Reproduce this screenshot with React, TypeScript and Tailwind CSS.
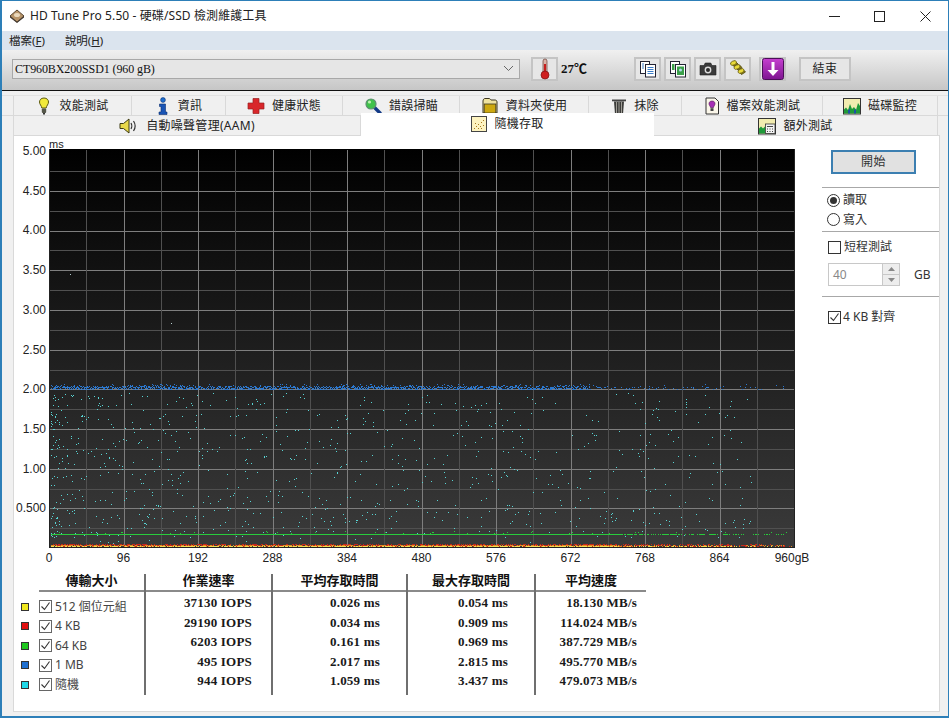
import type { ReactNode } from "react";

// seeded random so the scatter stays the same every run
let seed = 20240607;
function rnd() {
  seed = (seed * 1664525 + 1013904223) % 4294967296;
  return seed / 4294967296;
}

// walk the x axis and drop a dot per pixel column with probability p(x)
function band(p: (x: number) => number, yFn: () => number, layers = 1) {
  let d = "";
  for (let l = 0; l < layers; l++) {
    for (let x = 51; x < 793; x++) {
      if (rnd() < p(x)) d += `M${x} ${Math.round(yFn())}h1v1h-1z`;
    }
  }
  return d;
}

function scatter(count: number) {
  let d = "";
  for (let i = 0; i < count; i++) {
    const x = Math.round(51 + Math.pow(rnd(), 1.6) * 700);
    const y = Math.round(rnd() < 0.1 ? 505 + rnd() * 38 : 392 + rnd() * 145);
    d += `M${x} ${y}h1v1h-1z`;
  }
  return d;
}

const fade = (x: number) => (x < 590 ? 0.95 : x < 700 ? 0.2 : x < 760 ? 0.12 : 0.01);
const fadeLow = (x: number) => (x < 620 ? 1 : x < 730 ? 0.6 : x < 785 ? 0.38 : 0.05);

const cyanDots = scatter(880);
const blueDots =
  band((x) => fade(x), () => 386 + rnd() * 3.4, 2) +
  band((x) => (x < 600 ? 0.45 : 0.04), () => 384 + rnd() * 4);
const greenDots =
  band(fadeLow, () => 534) + band((x) => (x < 620 ? 0.08 : 0.02), () => 531 + rnd() * 3);
const redDots = band(fadeLow, () => 544 + rnd() * 2, 2);
const orangeDots = band(fadeLow, () => 545 + rnd());
const yellowDots = band((x) => fadeLow(x) * 0.7, () => 545.5 + rnd());

const ROW1: [string, number, ReactNode][] = [
  ["效能測試", 118, <BulbIcon />],
  ["資訊", 94, <InfoIcon />],
  ["健康狀態", 117, <CrossIcon />],
  ["錯誤掃瞄", 117, <SearchIcon />],
  ["資料夾使用", 129, <FolderIcon />],
  ["抹除", 93, <TrashIcon />],
  ["檔案效能測試", 141, <FileIcon />],
  ["磁碟監控", 115, <MonitorIcon />],
];

const ROWS = [
  { color: "bg-[#f0e81e]", label: "512 個位元組", iops: "37130 IOPS", avg: "0.026 ms", max: "0.054 ms", speed: "18.130 MB/s" },
  { color: "bg-[#e01010]", label: "4 KB", iops: "29190 IOPS", avg: "0.034 ms", max: "0.909 ms", speed: "114.024 MB/s" },
  { color: "bg-[#1ec81e]", label: "64 KB", iops: "6203 IOPS", avg: "0.161 ms", max: "0.969 ms", speed: "387.729 MB/s" },
  { color: "bg-[#1f6fd0]", label: "1 MB", iops: "495 IOPS", avg: "2.017 ms", max: "2.815 ms", speed: "495.770 MB/s" },
  { color: "bg-[#1fd8e8]", label: "隨機", iops: "944 IOPS", avg: "1.059 ms", max: "3.437 ms", speed: "479.073 MB/s" },
];

function BulbIcon() {
  return (
    <svg width="16" height="18" viewBox="0 0 16 18">
      <path d="M8 1c-3 0-4.500 2-4.500 4 0 2.500 2 3.500 2.300 6h4.400c.3-2.500 2.300-3.500 2.300-6 0-2-1.500-4-4.500-4z" fill="#f2ea3a" stroke="#5c5a10" />
      <rect x="5.800" y="11.500" width="4.400" height="4.500" rx="1" fill="#55574a" />
      <rect x="7" y="16" width="2" height="1.500" fill="#333" />
    </svg>
  );
}
function InfoIcon() {
  return (
    <svg width="16" height="18" viewBox="0 0 16 18">
      <circle cx="8" cy="3" r="2.400" fill="#1f6fd0" stroke="#0c2f70" strokeWidth=".6" />
      <path d="M4.500 7h6v8h1.500v2.500H4V15h2V9.500H4.500z" fill="#1a55b5" stroke="#0c2f70" strokeWidth=".6" />
    </svg>
  );
}
function CrossIcon() {
  return (
    <svg width="18" height="18" viewBox="0 0 18 18">
      <path d="M6 1.500h6v4.500h5v6h-5v4.500H6V12H1V6h5z" fill="#d8262a" stroke="#9a2020" strokeWidth=".7" />
    </svg>
  );
}
function SearchIcon() {
  return (
    <svg width="18" height="18" viewBox="0 0 18 18">
      <line x1="10" y1="10" x2="16" y2="16" stroke="#123a86" strokeWidth="3.400" strokeLinecap="round" />
      <circle cx="7" cy="7" r="5" fill="#3fc24a" stroke="#5d8f70" strokeWidth="1.200" />
      <circle cx="5.500" cy="5" r="1.600" fill="#bdf0b0" />
    </svg>
  );
}
function FolderIcon() {
  return (
    <svg width="18" height="18" viewBox="0 0 18 18">
      <path d="M2 4c0-1.500 1-2.500 2-2.500h4c1 0 1.500 1 2 1.500h4c1 0 2 .6 2 2v11H2z" fill="#efe3a0" stroke="#3b3520" />
      <rect x="3.200" y="7" width="11.600" height="9" fill="#cda80f" stroke="#3b3520" strokeWidth=".8" />
    </svg>
  );
}
function TrashIcon() {
  return (
    <svg width="16" height="18" viewBox="0 0 16 18">
      <path d="M1 2.500h14v1.800H1z" fill="#444" />
      <path d="M3 4.500h10l-1 12.500H4z" fill="#3c3c3a" />
      <path d="M5.500 5v11.500M8 5v11.500M10.500 5v11.500" stroke="#aaa8a0" strokeWidth=".9" />
    </svg>
  );
}
function FileIcon() {
  return (
    <svg width="16" height="18" viewBox="0 0 16 18">
      <path d="M2 1h9l3.500 3.500V17H2z" fill="#fbf7ea" stroke="#333" />
      <path d="M8 4c-2 0-3 1.300-3 2.700 0 1.600 1.300 2.200 1.500 3.800h3c.2-1.600 1.500-2.200 1.500-3.800C11 5.300 10 4 8 4z" fill="#a52fb5" stroke="#4a1050" strokeWidth=".6" />
      <rect x="6.500" y="11.200" width="3" height="2.800" fill="#444" />
    </svg>
  );
}
function MonitorIcon() {
  return (
    <svg width="18" height="18" viewBox="0 0 18 18">
      <rect x=".5" y="1.500" width="17" height="15.500" fill="#f2ecb0" stroke="#333" />
      <path d="M1 16.500v-4l2-2 2 2.500 2-6 2 5 2-2 2 3 2-7 2 3v7.500z" fill="#1f9a3a" />
      <path d="M5 16.500v-3l2-2v5zM11 16.500v-3l2-2v5z" fill="#1d4fa8" />
    </svg>
  );
}
function SpeakerIcon() {
  return (
    <svg width="20" height="16" viewBox="0 0 20 16">
      <path d="M1 5.500h3.500L10 1v14L4.500 10.500H1z" fill="#e8d84a" stroke="#3d3a10" />
      <path d="M12 5c1 1.500 1 4.500 0 6M14.500 3c2 3 2 7 0 10" fill="none" stroke="#333" strokeWidth="1.200" />
    </svg>
  );
}
function RandomIcon() {
  return (
    <svg width="16" height="16" viewBox="0 0 16 16">
      <rect x=".5" y=".5" width="15" height="15" fill="#fdf3c0" stroke="#444" />
      <path d="M3 12h1v1H3zM5 10h1v1H5zM7 12h1v1H7zM7 8h1v1H7zM9 10h1v1H9zM10 6h1v1h-1zM12 4h1v1h-1zM12 9h1v1h-1zM4 7h1v1H4zM10 12h1v1h-1z" fill="#a87a20" />
    </svg>
  );
}
function ExtraIcon() {
  return (
    <svg width="18" height="18" viewBox="0 0 18 18">
      <rect x=".5" y="1.500" width="17" height="15.500" fill="#f2ecb0" stroke="#333" />
      <path d="M1 16.500v-5l2-2 2 2 2-2v7z" fill="#1f9a3a" />
      <rect x="7.500" y="7" width="9.500" height="9.500" fill="#f4f4f4" stroke="#333" strokeWidth=".8" />
      <path d="M9 9h6v1H9zM9 11.500h1v1H9zM11.500 11.500h1v1h-1zM14 11.500h1v1h-1zM9 14h1v1H9zM11.500 14h1v1h-1zM14 14h1v1h-1z" fill="#444" />
    </svg>
  );
}
function ThermoIcon() {
  return (
    <svg width="14" height="22" viewBox="0 0 14 22">
      <rect x="5" y="1" width="4" height="14" rx="2" fill="#d9b3a8" stroke="#6a3a30" strokeWidth=".7" />
      <rect x="6" y="6" width="2" height="9" fill="#c81e1e" />
      <circle cx="7" cy="17" r="4" fill="#cf2020" stroke="#7a1414" strokeWidth=".7" />
    </svg>
  );
}
function CopyTextIcon() {
  return (
    <svg width="18" height="18" viewBox="0 0 18 18">
      <rect x="1.500" y="1.500" width="9" height="12" fill="#fff" stroke="#223" />
      <rect x="6.500" y="4.500" width="10" height="12.500" fill="#fff" stroke="#223" />
      <path d="M8.500 7.500h6M8.500 9.500h6M8.500 11.500h6M8.500 13.500h6" stroke="#3b7cc8" />
      <path d="M3 4h2M3 6h2M3 8h2" stroke="#3b7cc8" />
    </svg>
  );
}
function CopyImageIcon() {
  return (
    <svg width="18" height="18" viewBox="0 0 18 18">
      <rect x="1.500" y="1.500" width="9" height="12" fill="#fff" stroke="#223" />
      <rect x="6.500" y="4.500" width="10" height="12.500" fill="#fff" stroke="#223" />
      <rect x="8" y="6.500" width="7" height="8.500" fill="#3aa04a" />
      <rect x="3" y="4" width="2.500" height="6" fill="#3aa04a" />
      <circle cx="11.500" cy="10" r="1.500" fill="#b5d8f0" />
    </svg>
  );
}
function CameraIcon() {
  return (
    <svg width="18" height="16" viewBox="0 0 18 16">
      <path d="M1 4.500h4l1.200-2.500h5.600L13 4.500h4V14H1z" fill="#3a3a3a" stroke="#222" strokeWidth=".6" />
      <circle cx="9" cy="9" r="3.400" fill="#dcdcdc" />
      <circle cx="9" cy="9" r="2" fill="#2b2b2b" />
    </svg>
  );
}
function CoinsIcon() {
  return (
    <svg width="20" height="20" viewBox="0 0 20 20">
      <path d="M3 4l4-2 3 3-4 2.500zM7 8l4-2.500 3 3-4 2.500zM10 12l4-2.500 3.500 3.500-4 2.500z" fill="#8a7a14" stroke="#4c4408" strokeWidth=".8" />
      <ellipse cx="5.500" cy="4" rx="3.200" ry="2" transform="rotate(-25 5.500 4)" fill="#eadb3a" stroke="#5f5610" strokeWidth=".7" />
      <ellipse cx="9" cy="8" rx="3.200" ry="2" transform="rotate(-25 9 8)" fill="#eadb3a" stroke="#5f5610" strokeWidth=".7" />
      <ellipse cx="13" cy="12" rx="3.200" ry="2" transform="rotate(-25 13 12)" fill="#eadb3a" stroke="#5f5610" strokeWidth=".7" />
    </svg>
  );
}
function SaveDownIcon() {
  return (
    <svg width="22" height="22" viewBox="0 0 22 22">
      <defs>
        <linearGradient id="pur" x1="0" y1="0" x2="0" y2="1">
          <stop offset="0" stopColor="#c63fd0" />
          <stop offset="1" stopColor="#7d1590" />
        </linearGradient>
      </defs>
      <rect x=".5" y=".5" width="21" height="21" rx="2" fill="url(#pur)" stroke="#4b0f58" />
      <path d="M9.500 4h3v8h4l-5.500 6-5.500-6h4z" fill="#fff" />
    </svg>
  );
}
function DriveIcon() {
  return (
    <svg width="16" height="14" viewBox="0 0 16 14">
      <path d="M8 1l7 6-7 6-7-6z" fill="#b8956a" stroke="#5a4632" />
      <path d="M1 7l7 6 7-6v1.500L8 14 1 8.500z" fill="#3a3028" />
      <ellipse cx="8" cy="6" rx="3" ry="2" fill="#ead9bd" />
    </svg>
  );
}

function Tab({ label, width, icon, gap = "gap-[7px]" }: { label: string; width: number; icon: ReactNode; gap?: string }) {
  return (
    <div style={{ width }} className={`flex h-full shrink-0 items-center justify-center ${gap} border-r border-[#d9d9d9] text-[12px] tracking-[0.3px] text-[#222]`}>
      {icon}
      <span>{label}</span>
    </div>
  );
}

function ToolBtn({ children, className = "ml-[3px]" }: { children: ReactNode; className?: string }) {
  return <div className={`flex h-[24px] w-[27px] items-center justify-center border-2 border-[#c4c4c4] bg-[#e6e6e6] ${className}`}>{children}</div>;
}

function Check({ on = true, dim = false }: { on?: boolean; dim?: boolean }) {
  return (
    <span className={`flex h-[13px] w-[13px] shrink-0 items-center justify-center border bg-white ${dim ? "border-[#666]" : "border-[#333]"}`}>
      {on && (
        <svg width="11" height="11" viewBox="0 0 11 11">
          <path d="M1.500 5.500l3 3 5-7" fill="none" stroke="#333" strokeWidth="1.100" />
        </svg>
      )}
    </span>
  );
}

function Radio({ on = false }: { on?: boolean }) {
  return (
    <span className="flex h-[13px] w-[13px] shrink-0 items-center justify-center rounded-full border border-[#333] bg-white">
      {on && <span className="h-[7px] w-[7px] rounded-full bg-[#333]" />}
    </span>
  );
}

function Chart() {
  const vLines = Array.from({ length: 21 }, (_, i) => 49 + i * 37.25);
  const hLines = Array.from({ length: 19 }, (_, i) => 171 + i * 19.85);
  const yLabels = ["5.00", "4.50", "4.00", "3.50", "3.00", "2.50", "2.00", "1.50", "1.00", "0.500"];
  const xLabels = ["0", "96", "192", "288", "384", "480", "576", "672", "768", "864"];
  return (
    <svg width="800" height="434" viewBox="14 136 800 434" className="block">
      <defs>
        <linearGradient id="plot" x1="0" y1="0" x2="0" y2="1">
          <stop offset="0" stopColor="#000" />
          <stop offset="1" stopColor="#3b3b3b" />
        </linearGradient>
      </defs>
      <rect x="49" y="149" width="745.500" height="398.500" fill="url(#plot)" />
      {hLines.map((y, i) => (
        <line key={i} x1="49" x2="794.500" y1={Math.round(y) + 0.5} y2={Math.round(y) + 0.5} stroke={i % 2 === 1 ? "#7e7e7e" : "#505050"} />
      ))}
      {vLines.map((x, i) => (
        <line key={i} x1={Math.round(x) + 0.5} x2={Math.round(x) + 0.5} y1="150" y2="547.500" stroke={i % 2 === 0 ? "#7e7e7e" : "#505050"} />
      ))}
      <path d="M49.500 149v399M794.500 149v399M49 547.500h746" stroke="#222" fill="none" />
      <path d={cyanDots} fill="#58d4d4" />
      <path d={blueDots} fill="#2b78d0" />
      <path d={greenDots} fill="#28cc3c" />
      <path d={redDots} fill="#c8281e" />
      <path d={orangeDots} fill="#e88a20" />
      <path d={yellowDots} fill="#f0dc50" />
      <path d="M70 274h1v1h-1zM171 323h1v1h-1z" fill="#b8d0d0" />
      {yLabels.map((t, i) => (
        <text key={t} x="46" y={155 + i * 39.7} textAnchor="end" fontSize="12" fill="#222" fontFamily="Liberation Sans">
          {t}
        </text>
      ))}
      <text x="49" y="148" fontSize="11" fill="#222" fontFamily="Liberation Sans">ms</text>
      {xLabels.map((t, i) => (
        <text key={t} x={49 + i * 74.5} y="562" textAnchor="middle" fontSize="12" fill="#222" fontFamily="Liberation Sans">
          {t}
        </text>
      ))}
      <text x="792" y="562" textAnchor="middle" fontSize="12" fill="#222" fontFamily="Liberation Sans">960gB</text>
    </svg>
  );
}

function StatColumn({ head, values, width, border = true, pr }: { head: string; values: string[]; width: string; border?: boolean; pr: string }) {
  return (
    <div className={`flex flex-col ${width} ${border ? "border-r-2 border-[#6f6f6f]" : ""}`}>
      <div className="flex h-[18px] items-start justify-center border-b-2 border-[#8a8a8a] text-[13px] leading-[12px] font-bold text-[#111]">{head}</div>
      <div className="pt-[1px]">
        {values.map((v) => (
          <div key={v} className={`flex h-[19.5px] items-center justify-end ${pr} font-['Liberation_Serif',serif] text-[13px] font-bold tracking-[0.2px] text-[#1a1a1a]`}>
            {v}
          </div>
        ))}
      </div>
      <div className="h-[4px]" />
    </div>
  );
}

export default function App() {
  return (
    <div className="flex h-[718px] w-[949px] flex-col overflow-hidden border-t border-r border-b-2 border-l-2 border-[#2d7fb8] bg-[#f0f0f0] font-['Noto_Sans','Noto_Sans_CJK_TC',sans-serif] text-[#222]">
      {/* title bar */}
      <div className="flex h-[30px] shrink-0 items-center bg-white pl-[7px] text-[12px] text-[#222]">
        <DriveIcon />
        <span className="ml-[5px] tracking-[0.1px]">HD Tune Pro 5.50 - 硬碟/SSD 檢測維護工具</span>
        <div className="ml-auto flex items-center">
          <svg width="11" height="11" viewBox="0 0 11 11" className="mr-[34px]"><path d="M0 5.500h11" stroke="#222" /></svg>
          <svg width="11" height="11" viewBox="0 0 11 11" className="mr-[35px]"><rect x=".5" y=".5" width="10" height="10" fill="none" stroke="#222" /></svg>
          <svg width="11" height="11" viewBox="0 0 11 11" className="mr-[17px]"><path d="M.5.500l10 10M10.500.500l-10 10" stroke="#222" /></svg>
        </div>
      </div>

      {/* menu */}
      <div className="flex h-[19px] shrink-0 items-center gap-[20px] bg-[#dbe4ee] pl-[7px] text-[11.5px]">
        <span>檔案(<span className="underline">F</span>)</span>
        <span>說明(<span className="underline">H</span>)</span>
      </div>

      {/* toolbar */}
      <div className="flex h-[41px] shrink-0 items-center border-b-[1.5px] border-[#111] bg-gradient-to-b from-[#f0f0f0] to-[#c6c6c6] pb-[3px] pl-[10px]">
        <div className="flex h-[20px] w-[508px] items-center justify-between border border-[#a8a8a8] bg-[#e6e6e6] pr-[5px] pl-[2px] font-['Liberation_Serif',serif] text-[12px] tracking-[-0.1px] text-[#111]">
          <span>CT960BX200SSD1 (960 gB)</span>
          <svg width="11" height="7" viewBox="0 0 11 7"><path d="M1 1l4.500 4.500L10 1" fill="none" stroke="#666" /></svg>
        </div>
        <ToolBtn className="ml-[11px]"><ThermoIcon /></ToolBtn>
        <span className="ml-[3px] w-[31px] font-['Liberation_Serif','Noto_Sans_CJK_TC',serif] text-[13px] font-bold text-[#111]">27℃</span>
        <ToolBtn className="ml-[42px]"><CopyTextIcon /></ToolBtn>
        <ToolBtn><CopyImageIcon /></ToolBtn>
        <ToolBtn><CameraIcon /></ToolBtn>
        <ToolBtn><CoinsIcon /></ToolBtn>
        <ToolBtn className="ml-[8px]"><SaveDownIcon /></ToolBtn>
        <div className="ml-[13px] flex h-[24px] w-[52px] items-center justify-center border-2 border-[#c4c4c4] bg-[#e6e6e6] text-[12px] tracking-[0.5px]">結束</div>
      </div>

      {/* tabs */}
      <div className="mt-[4px] flex h-[20px] shrink-0 border-t border-[#e2e2e2] pl-[11px]">
        <div className="flex border-l border-[#d9d9d9]">
          {ROW1.map(([label, w, icon]) => (
            <Tab key={label} label={label} width={w} icon={icon} />
          ))}
        </div>
      </div>
      <div className="flex h-[20px] shrink-0 border-t border-[#d9d9d9] pl-[11px]">
        <div className="flex border-l border-[#d9d9d9]">
          <Tab label="自動噪聲管理(AAM)" width={347} icon={<SpeakerIcon />} />
          <div className="relative z-10 -mt-[3px] flex h-[24px] w-[293px] shrink-0 items-start justify-center gap-[7px] bg-white pt-[3px] text-[12px] leading-[16px] tracking-[0.3px]">
            <RandomIcon />
            <span>隨機存取</span>
          </div>
          <Tab label="額外測試" width={284} icon={<ExtraIcon />} />
        </div>
      </div>

      {/* panel */}
      <div className="mr-[8px] mb-[4px] ml-[11px] flex min-h-0 flex-1 border border-[#d9d9d9] bg-white">
        <div className="flex w-[808px] shrink-0 flex-col">
          <Chart />
          <div className="mt-[4px] flex pl-[7px]">
            <div className="flex w-[125px] flex-col border-r-2 border-[#6f6f6f]">
              <div className="ml-[18px] flex h-[18px] items-start justify-center border-b-2 border-[#8a8a8a] text-[13px] leading-[12px] font-bold text-[#111]">傳輸大小</div>
              <div className="pt-[5px]">
                {ROWS.map((r) => (
                  <div key={r.label} className="flex h-[19.5px] items-center text-[12px] text-[#444]">
                    <span className={`h-[8px] w-[8px] border border-[#333] ${r.color}`} />
                    <span className="ml-[10px]"><Check dim /></span>
                    <span className="ml-[3px]">{r.label}</span>
                  </div>
                ))}
              </div>
            </div>
            <StatColumn head="作業速率" width="w-[127px]" pr="pr-[19px]" values={ROWS.map((r) => r.iops)} />
            <StatColumn head="平均存取時間" width="w-[135px]" pr="pr-[26px]" values={ROWS.map((r) => r.avg)} />
            <StatColumn head="最大存取時間" width="w-[128px]" pr="pr-[26px]" values={ROWS.map((r) => r.max)} />
            <StatColumn head="平均速度" width="w-[110px]" pr="pr-[9px]" border={false} values={ROWS.map((r) => r.speed)} />
          </div>
        </div>

        {/* controls */}
        <div className="flex-1 pt-[14px] text-[12px] text-[#333]">
          <div className="ml-[9px] flex h-[24px] w-[85px] items-center justify-center border-2 border-[#3c7fb1] bg-[#e1e1e1] tracking-[0.5px]">開始</div>
          <div className="mt-[13px] border-t border-[#a8a8a8] pt-[2px] pl-[5px]">
            <div className="flex h-[20px] items-center gap-[3px]"><Radio on /><span>讀取</span></div>
            <div className="flex h-[19px] items-center gap-[3px]"><Radio /><span>寫入</span></div>
          </div>
          <div className="mt-[2px] border-t border-[#a8a8a8] pt-[5px] pl-[6px]">
            <div className="flex h-[20px] items-center gap-[3px]"><Check on={false} /><span>短程測試</span></div>
            <div className="mt-[6px] flex items-center">
              <div className="flex h-[23px] w-[72px] items-center justify-between border border-[#c8c8c8] pl-[4px] text-[#888]">
                <span>40</span>
                <div className="flex h-full w-[17px] flex-col border-l border-[#c8c8c8] bg-[#ededed]">
                  <span className="flex flex-1 items-center justify-center border-b border-[#c8c8c8]"><svg width="7" height="4" viewBox="0 0 7 4"><path d="M3.500 0L7 4H0z" fill="#888" /></svg></span>
                  <span className="flex flex-1 items-center justify-center"><svg width="7" height="4" viewBox="0 0 7 4"><path d="M0 0h7L3.500 4z" fill="#888" /></svg></span>
                </div>
              </div>
              <span className="ml-[14px]">GB</span>
            </div>
          </div>
          <div className="mt-[10px] border-t border-[#a8a8a8] pt-[12px] pl-[6px]">
            <div className="flex h-[16px] items-center gap-[2px]"><Check /><span>4 KB 對齊</span></div>
          </div>
        </div>
      </div>
    </div>
  );
}
